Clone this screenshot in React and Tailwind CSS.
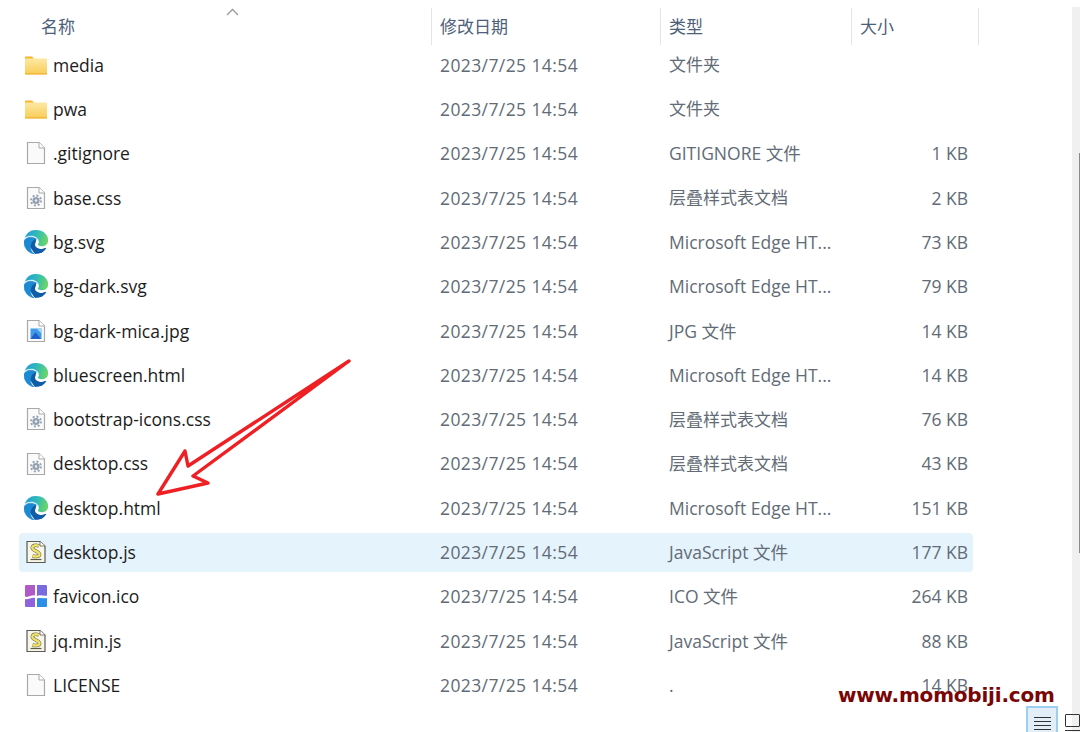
const font = { fontFamily: '"Open Sans", "Noto Sans CJK SC", sans-serif' }

const FILES = [
  { name: 'media', date: '2023/7/25 14:54', type: '文件夹', size: '', icon: 'folder' },
  { name: 'pwa', date: '2023/7/25 14:54', type: '文件夹', size: '', icon: 'folder' },
  { name: '.gitignore', date: '2023/7/25 14:54', type: 'GITIGNORE 文件', size: '1 KB', icon: 'blank' },
  { name: 'base.css', date: '2023/7/25 14:54', type: '层叠样式表文档', size: '2 KB', icon: 'css' },
  { name: 'bg.svg', date: '2023/7/25 14:54', type: 'Microsoft Edge HT...', size: '73 KB', icon: 'edge' },
  { name: 'bg-dark.svg', date: '2023/7/25 14:54', type: 'Microsoft Edge HT...', size: '79 KB', icon: 'edge' },
  { name: 'bg-dark-mica.jpg', date: '2023/7/25 14:54', type: 'JPG 文件', size: '14 KB', icon: 'jpg' },
  { name: 'bluescreen.html', date: '2023/7/25 14:54', type: 'Microsoft Edge HT...', size: '14 KB', icon: 'edge' },
  { name: 'bootstrap-icons.css', date: '2023/7/25 14:54', type: '层叠样式表文档', size: '76 KB', icon: 'css' },
  { name: 'desktop.css', date: '2023/7/25 14:54', type: '层叠样式表文档', size: '43 KB', icon: 'css' },
  { name: 'desktop.html', date: '2023/7/25 14:54', type: 'Microsoft Edge HT...', size: '151 KB', icon: 'edge' },
  { name: 'desktop.js', date: '2023/7/25 14:54', type: 'JavaScript 文件', size: '177 KB', icon: 'js', selected: true },
  { name: 'favicon.ico', date: '2023/7/25 14:54', type: 'ICO 文件', size: '264 KB', icon: 'ico' },
  { name: 'jq.min.js', date: '2023/7/25 14:54', type: 'JavaScript 文件', size: '88 KB', icon: 'js' },
  { name: 'LICENSE', date: '2023/7/25 14:54', type: '.', size: '14 KB', icon: 'blank' },
]

function Sheet({ children }) {
  return (
    <svg width="24" height="24" viewBox="0 0 24 24">
      <path d="M3.5 1.5H15L20.5 7V22.5H3.5Z" fill="#fafafa" stroke="#a9a9a9" strokeWidth="1.2" />
      <path d="M15 1.5V7H20.5" fill="#fff" stroke="#a9a9a9" strokeWidth="1" />
      {children}
    </svg>
  )
}

function FileIcon({ kind }) {
  if (kind === 'folder') {
    return (
      <svg width="24" height="24" viewBox="0 0 24 24">
        <defs>
          <linearGradient id="folder-fill" x1="0" y1="0" x2="0" y2="1">
            <stop offset="0" stopColor="#fde8a4" />
            <stop offset="1" stopColor="#f9cd55" />
          </linearGradient>
        </defs>
        <path d="M1 4.5C1 3.8 1.5 3.5 2 3.5H8L10 5.5V8H1Z" fill="#f7b52c" />
        <rect x="1" y="5.5" width="22" height="16" rx="1" fill="url(#folder-fill)" />
        <rect x="1" y="20" width="22" height="1.5" fill="#efb93f" />
      </svg>
    )
  }
  if (kind === 'blank') return <Sheet />
  if (kind === 'css') {
    return (
      <Sheet>
        <circle cx="12" cy="14.5" r="3.6" fill="#93a1b0" />
        <circle cx="12" cy="14.5" r="5" fill="none" stroke="#93a1b0" strokeWidth="1.8" strokeDasharray="2 1.9" />
        <circle cx="12" cy="14.5" r="1.2" fill="#eef1f4" />
      </Sheet>
    )
  }
  if (kind === 'jpg') {
    return (
      <Sheet>
        <rect x="6.5" y="9.5" width="11" height="10.5" fill="#3f9be8" />
        <path d="M6.5 20L11.5 13L17 20Z" fill="#2260c8" />
        <path d="M12.5 9.5H17.5V14.5Z" fill="#a4d4f7" />
      </Sheet>
    )
  }
  if (kind === 'js') {
    return (
      <svg width="24" height="24" viewBox="0 0 24 24">
        <path d="M3 1.5H16L21 6V22.5H3Z" fill="#f8f6ea" stroke="#5a5b53" strokeWidth="1.2" />
        <path d="M16 1.5V6H21" fill="#fff" stroke="#5a5b53" strokeWidth="0.8" />
        <path d="M15 6C11.5 4.5 7.5 5.5 8.5 8.5C9.5 11 15 11.5 15.5 14C16 16.5 12 17 8.5 16" fill="none" stroke="#6b6a45" strokeWidth="3.6" />
        <path d="M15 6C11.5 4.5 7.5 5.5 8.5 8.5C9.5 11 15 11.5 15.5 14C16 16.5 12 17 8.5 16" fill="none" stroke="#eee26a" strokeWidth="2.4" />
        <path d="M6.5 19.5H17.5" stroke="#5a5b45" strokeWidth="1.2" />
      </svg>
    )
  }
  if (kind === 'ico') {
    return (
      <svg width="24" height="24" viewBox="0 0 24 24">
        <path d="M1 2.5C1 1.5 1.5 1 2.5 1H11V11.5C8 10.5 4 14 1 12.5Z" fill="#b05ac8" />
        <path d="M13 1H21.5C22.5 1 23 1.5 23 2.5V11.5C20 12.5 16 10 13 12Z" fill="#7a6ae0" />
        <path d="M1 15C4 16 8 13 11 14V23H2.5C1.5 23 1 22.5 1 21.5Z" fill="#8f63dc" />
        <path d="M13 14.5C16 13 20 15 23 14V21.5C23 22.5 22.5 23 21.5 23H13Z" fill="#2b8ee8" />
      </svg>
    )
  }
  return (
    <svg width="24" height="24" viewBox="0 0 24 24">
      <defs>
        <linearGradient id="edge-top" x1="0" y1="0.3" x2="1" y2="0.5">
          <stop offset="0" stopColor="#1f9cdc" />
          <stop offset="0.55" stopColor="#34bfb0" />
          <stop offset="1" stopColor="#6fd65f" />
        </linearGradient>
      </defs>
      <path d="M6 17C6 12 8.5 9 12.5 8.5L11.5 13C9.5 16 14 21.5 21.5 18L18 22.5L11 24Z" fill="#0f5da8" />
      <path d="M21.86 17.86q.14 0 .25.12.1.13.1.25t-.11.33l-.32.46-.43.53-.44.5q-.21.25-.38.42l-.22.23q-.58.53-1.34 1.04-.76.51-1.6.91-.86.4-1.74.64t-1.67.24q-.9 0-1.69-.28-.8-.28-1.48-.78-.68-.5-1.22-1.17-.53-.66-.92-1.44-.38-.77-.58-1.6-.2-.83-.2-1.67 0-1 .32-1.96.33-.97.87-1.8.14.95.55 1.77.41.82 1.02 1.5.6.68 1.38 1.21.78.54 1.64.9.86.36 1.77.56.92.2 1.8.2 1.12 0 2.18-.24 1.06-.23 2.06-.72l.2-.1.2-.05z" fill="#0f5da8" />
      <path d="M6.36 16.59q0 1.1.27 2.15.27 1.06.78 2.03.51.96 1.24 1.77.74.82 1.66 1.4-1.47-.2-2.8-.74-1.33-.55-2.48-1.37-1.15-.83-2.08-1.9-.92-1.07-1.58-2.33T.36 14.94Q0 13.54 0 12.06q0-.81.32-1.49.31-.68.83-1.23.53-.55 1.2-.96.66-.4 1.35-.66.74-.27 1.5-.39.78-.12 1.55-.12.7 0 1.42.1.72.12 1.4.35.68.23 1.32.57.63.35 1.16.83-.35 0-.7.07-.33.07-.65.23v-.02q-.63.28-1.2.74-.57.46-1.05 1.04-.48.58-.87 1.26-.38.67-.65 1.39-.27.71-.42 1.44-.15.72-.15 1.38z" fill="#1c8ad2" stroke="#1c8ad2" strokeWidth="0.6" />
      <path d="M11.96.06q1.7 0 3.33.39 1.63.38 3.07 1.15 1.43.77 2.62 1.93 1.18 1.16 1.98 2.7.49.94.76 1.96.28 1 .28 2.08 0 .89-.23 1.7-.24.8-.69 1.48-.45.68-1.1 1.22-.64.53-1.45.88-.54.24-1.11.36-.58.13-1.16.13-.42 0-.97-.03-.54-.03-1.1-.12-.55-.1-1.05-.28-.5-.19-.84-.5-.12-.09-.23-.24-.1-.16-.1-.33 0-.15.16-.35.16-.2.35-.5.2-.28.36-.68.16-.4.16-.95 0-1.06-.4-1.96-.4-.91-1.06-1.64-.66-.74-1.52-1.28-.86-.55-1.79-.89-.84-.3-1.72-.44-.87-.14-1.76-.14-1.55 0-3.06.45T.94 7.55q.71-1.74 1.81-3.13Q3.85 3.03 5.2 2.03 6.55 1.04 8.16.5q1.6-.55 3.8-.44z" fill="url(#edge-top)" stroke="#2fb0c4" strokeWidth="0.3" />
    </svg>
  )
}

function FileRow({ file }) {
  const cjkType = /^[\u4e00-\u9fff]+$/.test(file.type)
  return (
    <div className={`flex items-center h-[39px] w-[954px] text-[17.5px] ${file.selected ? 'bg-[#e5f3fd] rounded-sm' : ''}`}>
      <div className="w-[421px] flex items-center pl-[5px] gap-[5px] shrink-0">
        <FileIcon kind={file.icon} />
        <span className="text-[#1c1c1c]">{file.name}</span>
      </div>
      <div className="w-[229px] shrink-0 text-[#626b76] tracking-[0.4px]">{file.date}</div>
      <div className={`w-[240px] shrink-0 text-[#626b76] whitespace-nowrap ${cjkType ? 'text-[17px]' : ''}`}>{file.type}</div>
      <div className="w-[59px] shrink-0 text-right text-[#626b76] whitespace-nowrap">{file.size}</div>
    </div>
  )
}

function HeaderCell({ label, className }) {
  return (
    <div className={`h-[37px] flex items-center text-[17px] text-[#4d6079] ${className}`}>
      {label}
    </div>
  )
}

export default function App() {
  return (
    <div className="relative w-[1080px] h-[732px] overflow-hidden bg-white flex" style={font}>
      <div className="flex-1 pt-[8px]">
        <div className="relative flex w-[979px]">
          <HeaderCell label="名称" className="w-[431px] pl-[41px]" />
          <HeaderCell label="修改日期" className="w-[229px] pl-[8px] border-l border-[#e5e5e5]" />
          <HeaderCell label="类型" className="w-[191px] pl-[8px] border-l border-[#e5e5e5]" />
          <HeaderCell label="大小" className="w-[128px] pl-[8px] border-x border-[#e5e5e5]" />
          <svg className="absolute left-[226px] top-0" width="13" height="8" viewBox="0 0 13 8">
            <path d="M1 7L6.5 1.5L12 7" fill="none" stroke="#9a9a9a" strokeWidth="1.3" />
          </svg>
        </div>
        <div className="flex flex-col gap-[5.3px] ml-[19px] mt-[0.4px]">
          {FILES.map((file) => (
            <FileRow key={file.name} file={file} />
          ))}
        </div>
      </div>

      <div className="w-[8px] h-[725px] mt-[7px] bg-[#f0f0f0] flex justify-end pt-[146px] shrink-0">
        <div className="w-px h-[400px] bg-[#8a8a8a]" />
      </div>

      <svg className="absolute left-[150px] top-[355px]" width="205" height="145" viewBox="150 355 205 145">
        <path d="M349 361L188 466L185 451L158 494L208 483L193 476Z" fill="#fff" stroke="#ee2024" strokeWidth="3.4" strokeLinejoin="round" />
      </svg>

      <div className="absolute left-[838px] top-[681px] text-[20px] leading-7 font-bold text-[#7a0505] tracking-[-0.2px] whitespace-nowrap" style={{ fontFamily: '"DejaVu Sans", sans-serif' }}>
        www.momobiji.com
      </div>

      <div className="absolute left-[1026px] top-[706px] w-[32px] h-[26px] border-2 border-b-0 border-[#9bd0f2] bg-[#e2eff9] flex flex-col items-center gap-[3px] pt-[9px]">
        <div className="w-[17px] h-px bg-[#333]" />
        <div className="w-[17px] h-px bg-[#333]" />
        <div className="w-[17px] h-px bg-[#333]" />
        <div className="w-[17px] h-px bg-[#333]" />
      </div>
      <div className="absolute left-[1065px] top-[714px] w-[15px] h-[13px] border border-[#333] rounded-[1px]" />
      <div className="absolute left-[1065px] top-[730px] w-[15px] h-px bg-[#333]" />
    </div>
  )
}
